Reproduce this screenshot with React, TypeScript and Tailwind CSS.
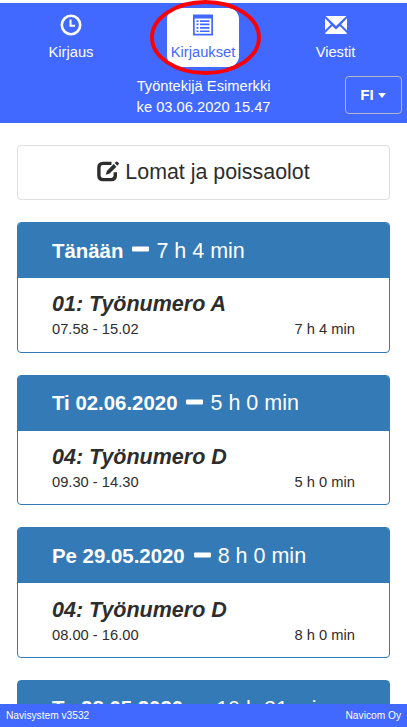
import React from "react";

interface Entry {
  day: string;
  total: string;
  job: string;
  time: string;
}

const entries: Entry[] = [
  { day: "Tänään", total: "7 h 4 min", job: "01: Työnumero A", time: "07.58 - 15.02" },
  { day: "Ti 02.06.2020", total: "5 h 0 min", job: "04: Työnumero D", time: "09.30 - 14.30" },
  { day: "Pe 29.05.2020", total: "8 h 0 min", job: "04: Työnumero D", time: "08.00 - 16.00" },
];

function ClockIcon() {
  return (
    <svg className="h-[22px] w-[22px]" viewBox="0 0 22 22" fill="none" stroke="currentColor">
      <circle cx="11" cy="11" r="9.2" strokeWidth="2.6" />
      <path d="M10.5 5.5v6.2h4.5" strokeWidth="2" />
    </svg>
  );
}

function ListIcon() {
  return (
    <svg className="h-[22px] w-5" viewBox="0 0 20 22" fill="currentColor">
      <path fillRule="evenodd" d="M0 .5h20V21.5H0zM1.7 4.5v15.3h16.6V4.5z" />
      <path d="M3.5 6.2h2v1.7h-2zM7 6.2h9.5v1.7H7zM3.5 9.6h2v1.7h-2zM7 9.6h9.5v1.7H7zM3.5 13h2v1.7h-2zM7 13h9.5v1.7H7zM3.5 16.4h2v1.7h-2zM7 16.4h9.5v1.7H7z" />
    </svg>
  );
}

function EnvelopeIcon() {
  return (
    <svg className="h-[18px] w-[22px]" viewBox="0 0 22 18" fill="currentColor">
      <path d="M.6 0h20.8L11 10.1z" />
      <path d="M0 2.2l5.9 6.2L0 14.3zM22 2.2l-5.9 6.2L22 14.3z" />
      <path d="M7.2 9.9L11 13.6l3.8-3.7 7 7V18H.2v-1.1z" />
    </svg>
  );
}

function EditIcon() {
  return (
    <svg className="h-[21px] w-[22px] shrink-0 -translate-y-px" viewBox="0 0 22 21" fill="none">
      <path
        d="M14.5 2.4H6Q1.9 2.4 1.9 6.5v8q0 4.1 4.1 4.1h8.200q4.100 0 4.100-4.100v-3.200"
        stroke="currentColor"
        strokeWidth="3.4"
      />
      <path d="M8.7 13.8l1.3-4 6.7-6.7 2.7 2.7-6.7 6.7z" fill="currentColor" />
      <path d="M17.7 2.1l1.4-1.4q.6-.6 1.2 0l1.4 1.4q.6.6 0 1.2L20.4 4.7z" fill="currentColor" />
    </svg>
  );
}

function EntryHeading({ day, total }: { day: string; total: string }) {
  return (
    <h2 className="flex h-[55px] items-center bg-[#337ab7] pt-[0.6px] pl-[34px] text-[21.5px] whitespace-nowrap text-white">
      <b className="text-[20.4px]">{day}</b>
      <span className="mr-[7px] ml-[9px] h-[5px] w-[17px] -translate-y-[1.5px] rounded-[1px] bg-white" />
      <span>{total}</span>
    </h2>
  );
}

function EntryCard({ entry }: { entry: Entry }) {
  return (
    <section className="mb-[22.1px] h-[130.5px] shrink-0 overflow-hidden rounded border border-[#337ab7] bg-white">
      <EntryHeading day={entry.day} total={entry.total} />
      <div className="px-[34px] pt-[14.3px]">
        <h3 className="text-[21.5px] leading-6 font-bold italic">{entry.job}</h3>
        <p className="mt-[2px] flex justify-between text-[14.7px] leading-[22px]">
          <span>{entry.time}</span>
          <span>{entry.total}</span>
        </p>
      </div>
    </section>
  );
}

export default function App() {
  return (
    <div className="flex h-[727px] w-full flex-col overflow-hidden bg-white pt-[3px] font-['Liberation_Sans',Arial,sans-serif] text-[#2d2d2d]">
      <header className="relative h-[120px] shrink-0 bg-[#4169ff] text-[14.7px] text-white">
        <nav className="grid grid-cols-[142px_122px_143px] pt-[5px]">
          <a className="flex flex-col items-center pt-[6px]">
            <ClockIcon />
            <span className="mt-[6px] leading-5">Kirjaus</span>
          </a>
          <a className="mx-auto flex h-[59px] w-[72px] flex-col items-center rounded-[11px] bg-white pt-[6px] text-[#4169ff]">
            <ListIcon />
            <span className="mt-[6px] leading-5">Kirjaukset</span>
          </a>
          <a className="flex flex-col items-center pt-[8px]">
            <EnvelopeIcon />
            <span className="mt-[8px] leading-5">Viestit</span>
          </a>
        </nav>
        <div className="flex justify-end pt-[9px] pr-[5.5px]">
          <p className="mr-[74px] text-right leading-[20.5px] whitespace-nowrap">
            Työntekijä Esimerkki
            <br />
            ke 03.06.2020 15.47
          </p>
          <button className="flex h-[38px] w-[57px] items-center justify-center rounded-[4px] border border-[#b3b7c8] text-[15.2px] font-bold">
            FI
            <span className="ml-1 border-x-[4.5px] border-t-[5px] border-x-transparent border-t-white" />
          </button>
        </div>
        {/* highlight ring around the active tab */}
        <svg
          className="absolute -top-[3px] left-[149px] h-[76px] w-[113px]"
          viewBox="0 0 113 76"
          fill="none"
        >
          <ellipse cx="56.5" cy="37.5" rx="53.5" ry="35.5" stroke="#fb0007" strokeWidth="3.9" />
        </svg>
      </header>

      <main className="flex min-h-0 flex-1 flex-col overflow-hidden px-[17px] pt-[21.5px]">
        <button className="mb-[22.2px] flex h-[55.5px] shrink-0 items-center justify-center gap-[6px] rounded border border-[#dedede] text-[21.4px]">
          <EditIcon />
          <span>Lomat ja poissaolot</span>
        </button>
        {entries.map((entry) => (
          <EntryCard key={entry.day} entry={entry} />
        ))}
        {/* next day, continues below the footer */}
        <section className="shrink-0 rounded-t border border-[#337ab7] bg-[#337ab7]">
          <EntryHeading day="To 28.05.2020" total="10 h 21 min" />
        </section>
      </main>

      <footer className="flex h-[23px] shrink-0 items-center justify-between bg-[#4169ff] px-[6px] pt-px text-[10.2px] text-white">
        <span>Navisystem v3532</span>
        <span>Navicom Oy</span>
      </footer>
    </div>
  );
}
